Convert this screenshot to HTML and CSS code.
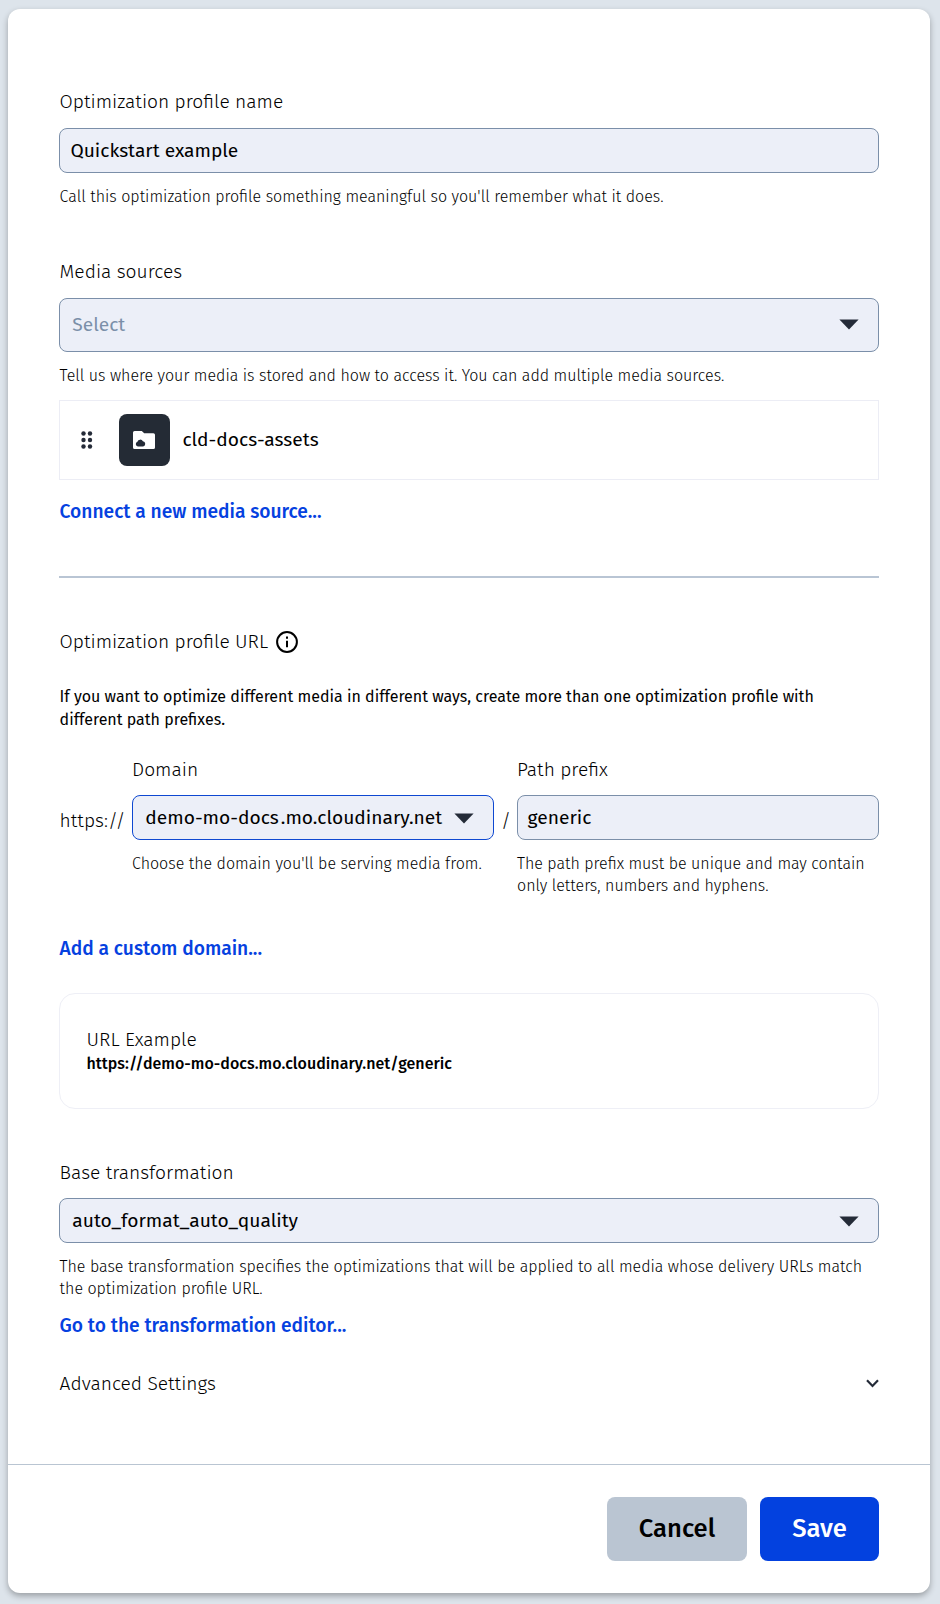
FILE: index.html
```html
<!DOCTYPE html>
<html lang="en">
<head>
<meta charset="utf-8">
<title>Optimization profile</title>
<link rel="stylesheet" href="styles.css">
</head>
<body>
<form class="dialog">
  <div class="dialog-body">
    <section class="field">
      <div class="label">Optimization profile name</div>
      <div class="control">Quickstart example</div>
      <p class="help">Call this optimization profile something meaningful so you'll remember what it does.</p>
    </section>

    <section class="field field-sources">
      <div class="label">Media sources</div>
      <div class="control control-select control-tall">
        <span class="placeholder">Select</span>
        <svg class="caret" width="20" height="11" viewBox="0 0 20 11"><path d="M.4.6h19.2L10 10.4z" fill="#242b38"/></svg>
      </div>
      <p class="help">Tell us where your media is stored and how to access it. You can add multiple media sources.</p>
      <div class="source">
        <svg class="grip" width="12" height="20" viewBox="0 0 12 20" fill="#242b38"><circle cx="2.5" cy="3.5" r="2.2"/><circle cx="9" cy="3.5" r="2.2"/><circle cx="2.5" cy="10" r="2.2"/><circle cx="9" cy="10" r="2.2"/><circle cx="2.5" cy="16.5" r="2.2"/><circle cx="9" cy="16.5" r="2.2"/></svg>
        <span class="source-icon">
          <svg width="22" height="18" viewBox="0 0 22 18"><path d="M1.600 0h7.200l2.400 2.200h9.200A1.600 1.600 0 0 1 22 3.800V16.400A1.600 1.600 0 0 1 20.400 18H1.600A1.600 1.600 0 0 1 0 16.400V1.600A1.600 1.600 0 0 1 1.600 0z" fill="#fff"/><path d="M4.900 15.500a2.500 2.500 0 0 1-.5-4.800 3 3 0 0 1 5.500-.5 2.700 2.700 0 0 1 .3 5.300z" fill="#242b38"/></svg>
        </span>
        <span class="source-name">cld-docs-assets</span>
      </div>
      <a class="link">Connect a new media source...</a>
    </section>

    <hr class="divider">

    <section class="field field-url">
      <div class="label label-info">Optimization profile URL
        <svg width="22" height="22" viewBox="0 0 22 22"><circle cx="11" cy="11" r="9.900" fill="none" stroke="#000" stroke-width="2"/><path d="M10 5.600h2v2.200h-2zM10 9.700h2v6.500h-2z"/></svg>
      </div>
      <p class="note">If you want to optimize different media in different ways, create more than one optimization profile with different path prefixes.</p>
      <div class="url-row">
        <span class="url-part">https://</span>
        <div class="url-col">
          <div class="label">Domain</div>
          <div class="control control-select control-focus">
            <span><span class="subdomain">demo-mo-docs</span><span>.mo.cloudinary.net</span></span>
            <svg class="caret" width="20" height="11" viewBox="0 0 20 11"><path d="M.4.6h19.2L10 10.4z" fill="#242b38"/></svg>
          </div>
          <p class="help">Choose the domain you'll be serving media from.</p>
        </div>
        <span class="url-part url-slash">/</span>
        <div class="url-col">
          <div class="label">Path prefix</div>
          <div class="control">generic</div>
          <p class="help">The path prefix must be unique and may contain only letters, numbers and hyphens.</p>
        </div>
      </div>
      <a class="link">Add a custom domain...</a>
      <div class="example">
        <div class="label">URL Example</div>
        <div class="example-url">https://demo-mo-docs.mo.cloudinary.net/generic</div>
      </div>
    </section>

    <section class="field field-base">
      <div class="label">Base transformation</div>
      <div class="control control-select">
        <span>auto_format_auto_quality</span>
        <svg class="caret" width="20" height="11" viewBox="0 0 20 11"><path d="M.4.6h19.2L10 10.4z" fill="#242b38"/></svg>
      </div>
      <p class="help">The base transformation specifies the optimizations that will be applied to all media whose delivery URLs match the optimization profile URL.</p>
      <a class="link">Go to the transformation editor...</a>
    </section>

    <div class="advanced">
      <span class="label">Advanced Settings</span>
      <svg class="chevron" width="13" height="9" viewBox="0 0 13 9"><path d="M1 1.300 6.500 6.900 12 1.300" fill="none" stroke="#242b38" stroke-width="2.200"/></svg>
    </div>
  </div>

  <footer class="dialog-footer">
    <button type="button" class="button button-cancel">Cancel</button>
    <button type="button" class="button button-save">Save</button>
  </footer>
</form>
</body>
</html>
```
FILE: styles.css
```css
* {
  box-sizing: border-box;
}

body {
  margin: 0;
  height: 1604px;
  padding: 9px 10px 11px 8px;
  overflow: hidden;
  background: #dde4eb;
  color: #000;
  font-family: "Fira Sans", "Open Sans", "Noto Sans", sans-serif;
  font-size: 19.2px;
  line-height: 24px;
}

p {
  margin: 0;
}

.dialog {
  display: flex;
  flex-direction: column;
  width: 922px;
  height: 1584px;
  background: #fff;
  border-radius: 12px;
  box-shadow: 0 3px 6px rgba(0, 0, 0, 0.3);
}

.dialog-body {
  flex: 1;
  padding: 81px 51px 0;
}

.label,
.help,
.link,
.note,
.url-part {
  padding-left: 0.6px;
}

.label {
  font-weight: 300;
}

.control {
  display: flex;
  align-items: center;
  height: 45px;
  margin-top: 14px;
  padding: 1px 10.4px 0;
  border: 1px solid #7b8fa9;
  border-radius: 8px;
  background: #eceff8;
  white-space: nowrap;
}

.control-select {
  justify-content: space-between;
  padding: 1px 19.4px 0 12.3px;
}

.control-tall {
  height: 54px;
  padding-top: 0;
  padding-bottom: 1px;
}

.control-focus {
  border-color: #0e48d1;
}

.placeholder {
  color: #7b8fa9;
}

.help {
  margin-top: 13px;
  font-size: 16px;
  font-weight: 300;
  line-height: 22px;
}

.link {
  display: block;
  color: #0541e0;
  font-weight: 500;
}

.field-sources {
  margin-top: 52px;
}

.source {
  display: flex;
  align-items: center;
  height: 80px;
  margin: 13px 0 20px;
  padding: 0 20.8px;
  border: 1px solid #ecedf5;
}

.source-icon {
  display: flex;
  align-items: center;
  justify-content: center;
  width: 51px;
  height: 52px;
  margin: 0 12.4px 0 26.2px;
  padding-right: 1px;
  border-radius: 8px;
  background: #242b35;
}

.divider {
  height: 2px;
  margin: 52px 0 52px;
  border: 0;
  background: #b9c5d4;
}

.label-info {
  display: flex;
  align-items: center;
  gap: 8px;
}

.note {
  margin: 31px 0 27px;
  font-size: 16px;
  line-height: 23px;
}

.url-row {
  display: grid;
  grid-template-columns: 73px 362px 23px 362px;
}

.url-row .label,
.url-row .help {
  padding-left: 0;
}

.url-row .control {
  margin-top: 13px;
}

.url-row .control:not(.control-select) {
  padding-left: 9.6px;
}

.url-part {
  padding-top: 51px;
  font-weight: 300;
}

.url-slash {
  padding-left: 7px;
}

.subdomain {
  margin-right: 2px;
}

.url-row + .link {
  margin-top: 40px;
}

.example {
  height: 116px;
  margin-top: 32px;
  padding: 34px 26px;
  border: 1px solid #eeeff6;
  border-radius: 16px;
}

.example-url {
  margin-top: 1px;
  padding-left: 0.4px;
  font-size: 16px;
  font-weight: 500;
  letter-spacing: 0.035px;
  line-height: 22px;
}

.field-base {
  margin-top: 52px;
}

.field-base .control {
  margin-top: 13px;
}

.field-base .link {
  margin-top: 14px;
}

.advanced {
  display: flex;
  align-items: center;
  justify-content: space-between;
  margin-top: 34px;
}

.chevron {
  margin-bottom: 1px;
}

.dialog-footer {
  display: flex;
  justify-content: flex-end;
  gap: 13px;
  height: 129px;
  padding: 32px 51px 0;
  border-top: 1px solid #b9c5d2;
}

.button {
  height: 64px;
  padding: 0;
  border: 0;
  border-radius: 8px;
  font: 500 25.6px/30px "Fira Sans", "Open Sans", "Noto Sans", sans-serif;
}

.button-cancel {
  width: 140px;
  background: #bac5d2;
  color: #000;
}

.button-save {
  width: 119px;
  background: #0341df;
  color: #fff;
}
```
